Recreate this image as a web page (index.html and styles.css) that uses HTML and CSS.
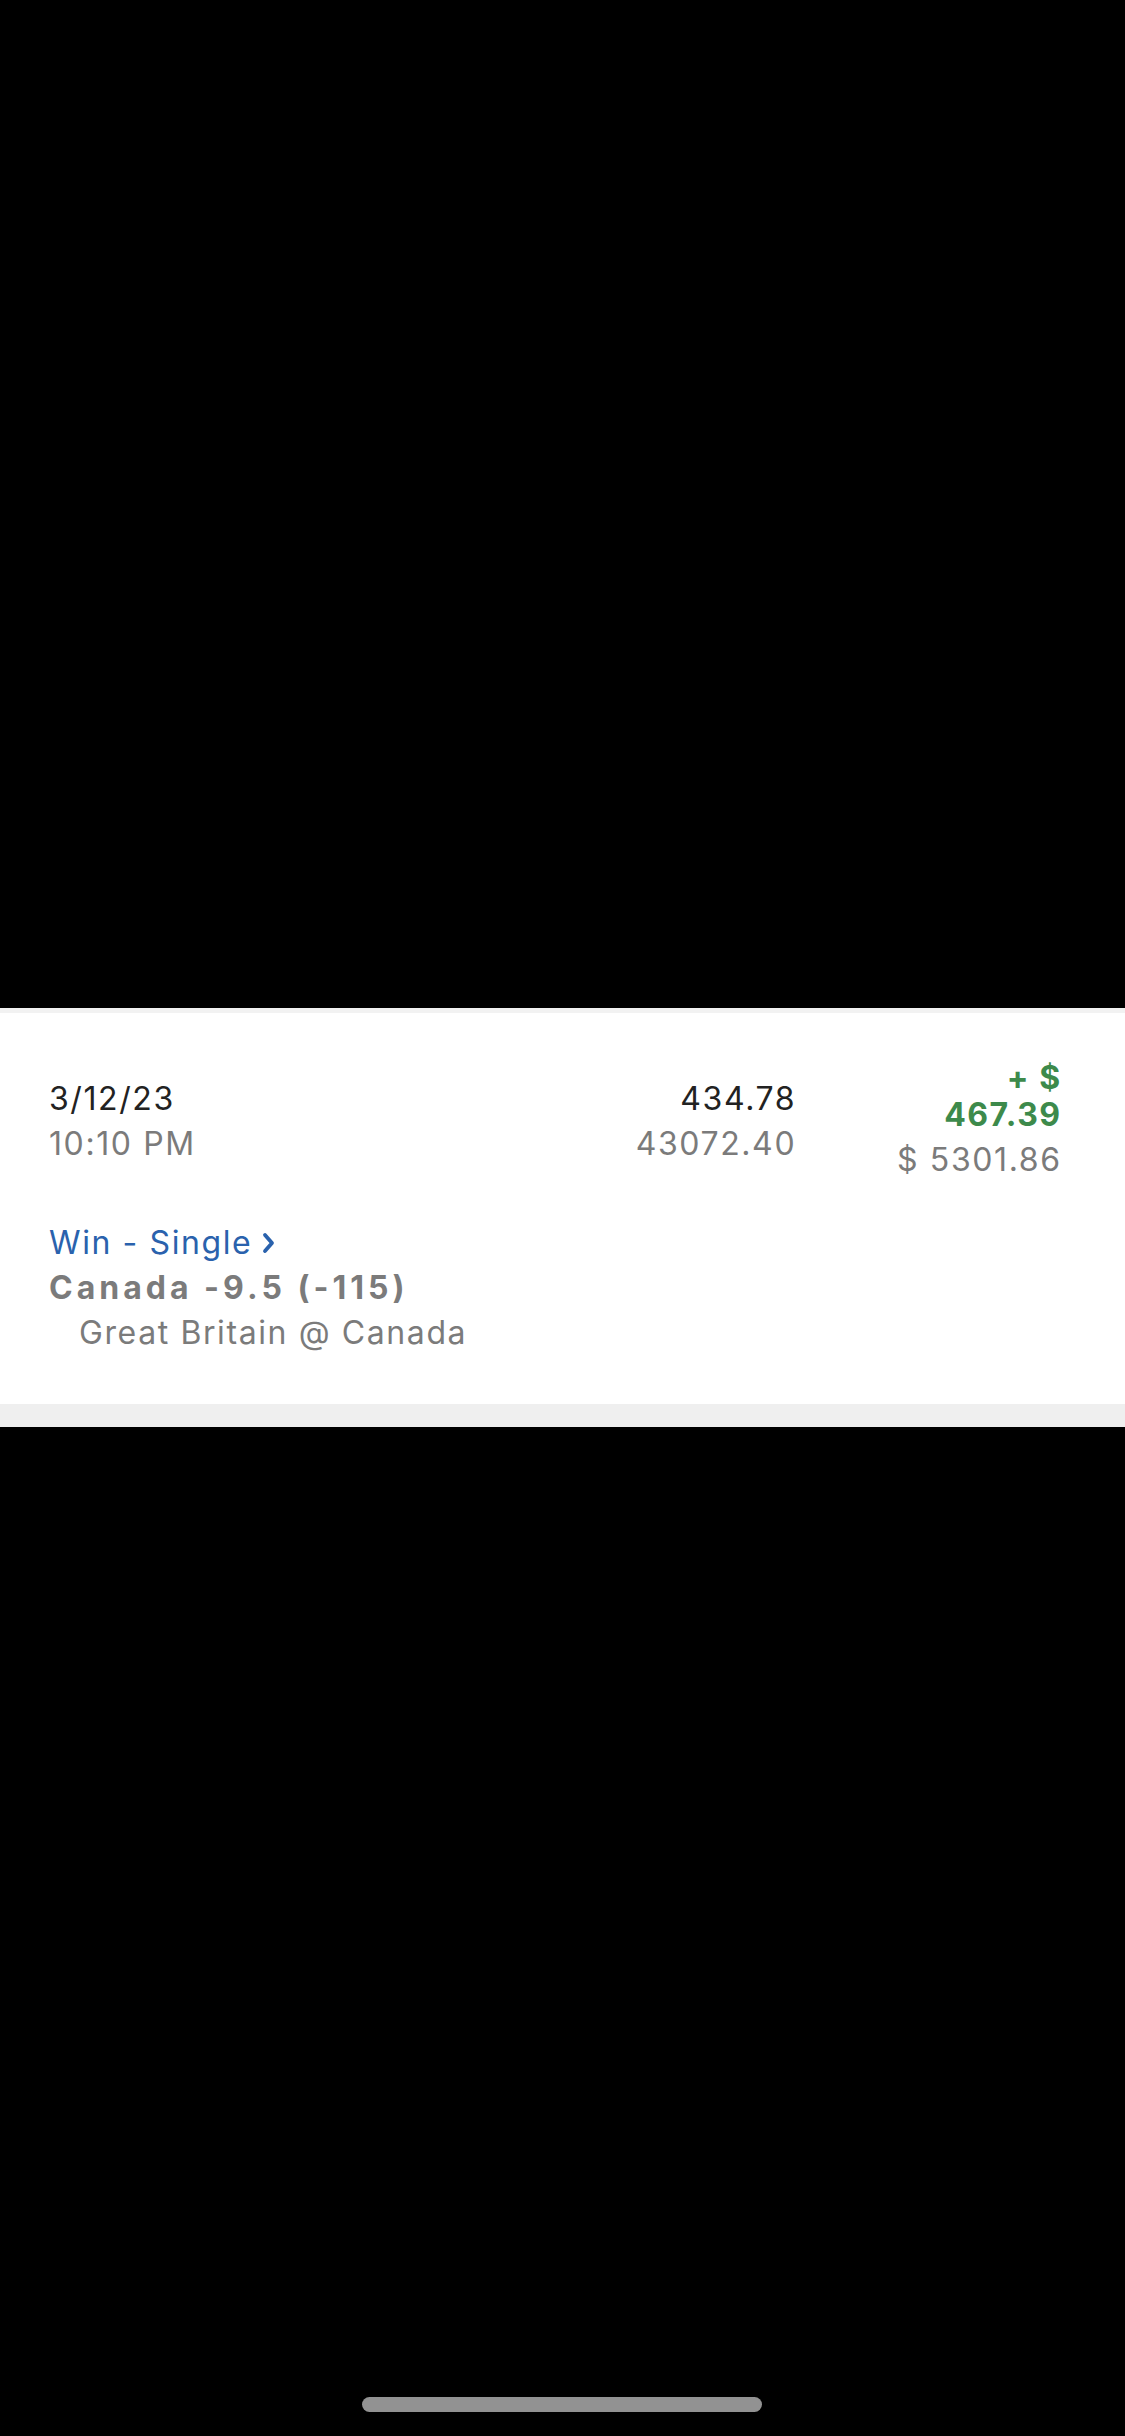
FILE: index.html
```html
<!DOCTYPE html>
<html lang="en">
<head>
    <meta charset="UTF-8">
    <meta name="viewport" content="width=device-width, initial-scale=1.0">
    <title>Bet History</title>
    <link rel="stylesheet" href="styles.css">
</head>
<body>
    <div class="screen">
        <div class="blank-top"></div>

        <!-- Một dòng lịch sử cược -->
        <div class="bet-card">
            <div class="bet-row">
                <div class="bet-date">
                    <div class="date">3/12/23</div>
                    <div class="time">10:10 PM</div>
                </div>
                <div class="bet-amount">
                    <div class="stake">434.78</div>
                    <div class="muted">43072.40</div>
                </div>
                <div class="bet-result">
                    <div class="profit">+ $<br>467.39</div>
                    <div class="balance">$ 5301.86</div>
                </div>
            </div>

            <div class="bet-info">
                <a class="bet-type" href="#">Win - Single
                    <svg class="chevron" width="14" height="22" viewBox="0 0 14 22">
                        <path d="M3 3 L10 11 L3 19" fill="none" stroke="#2a62ad" stroke-width="3.8" stroke-linecap="round" stroke-linejoin="round"/>
                    </svg>
                </a>
                <div class="pick">Canada -9.5 (-115)</div>
                <div class="match">Great Britain @ Canada</div>
            </div>
        </div>
        <div class="divider"></div>
    </div>

    <div class="home-bar"></div>
</body>
</html>
```

FILE: styles.css
```css
/* Nền đen toàn màn hình */
body {
    margin: 0;
    padding: 0;
    background-color: #000;
    font-family: 'Inter', 'Roboto', sans-serif;
}

.screen {
    width: 1125px;
}

.blank-top {
    height: 1008px;
}

/* Thẻ trắng */
.bet-card {
    background-color: #fff;
    border-top: 5px solid #f2f2f2;
    padding: 46px 65px 49px 49px;
}

.bet-row {
    display: flex;
    align-items: center;
}

.bet-date {
    flex: 1;
}

.date, .stake {
    font-size: 32px;
    line-height: 45px;
    letter-spacing: 1.6px;
    color: #222;
}

.time, .muted {
    font-size: 32px;
    line-height: 45px;
    letter-spacing: 1.6px;
    color: #7b7b7b;
}

.bet-amount {
    text-align: right;
    margin-right: -1.6px;
}

.bet-result {
    width: 170px;
    margin-left: 97px;
    margin-right: -1.6px;
    text-align: right;
}

.profit {
    font-size: 32px;
    line-height: 37px;
    font-weight: bold;
    letter-spacing: 1.5px;
    color: #3d8a4b;
}

.balance {
    font-size: 32px;
    line-height: 45px;
    margin-top: 4px;
    letter-spacing: 1.6px;
    color: #7b7b7b;
}

/* Phần thông tin cược */
.bet-info {
    margin-top: 38px;
}

.bet-type {
    display: inline-flex;
    align-items: center;
    gap: 10px;
    font-size: 32px;
    line-height: 45px;
    letter-spacing: 1.6px;
    color: #2a62ad;
    text-decoration: none;
}

.pick {
    font-size: 32px;
    line-height: 45px;
    font-weight: bold;
    letter-spacing: 4px;
    color: #7b7b7b;
}

.match {
    font-size: 32px;
    line-height: 45px;
    padding-left: 30px;
    letter-spacing: 1.6px;
    color: #7b7b7b;
}

.divider {
    height: 23px;
    background-color: #efefef;
}

/* Thanh home */
.home-bar {
    position: fixed;
    left: 362px;
    bottom: 24px;
    width: 400px;
    height: 15px;
    border-radius: 8px;
    background-color: #929292;
}
```
